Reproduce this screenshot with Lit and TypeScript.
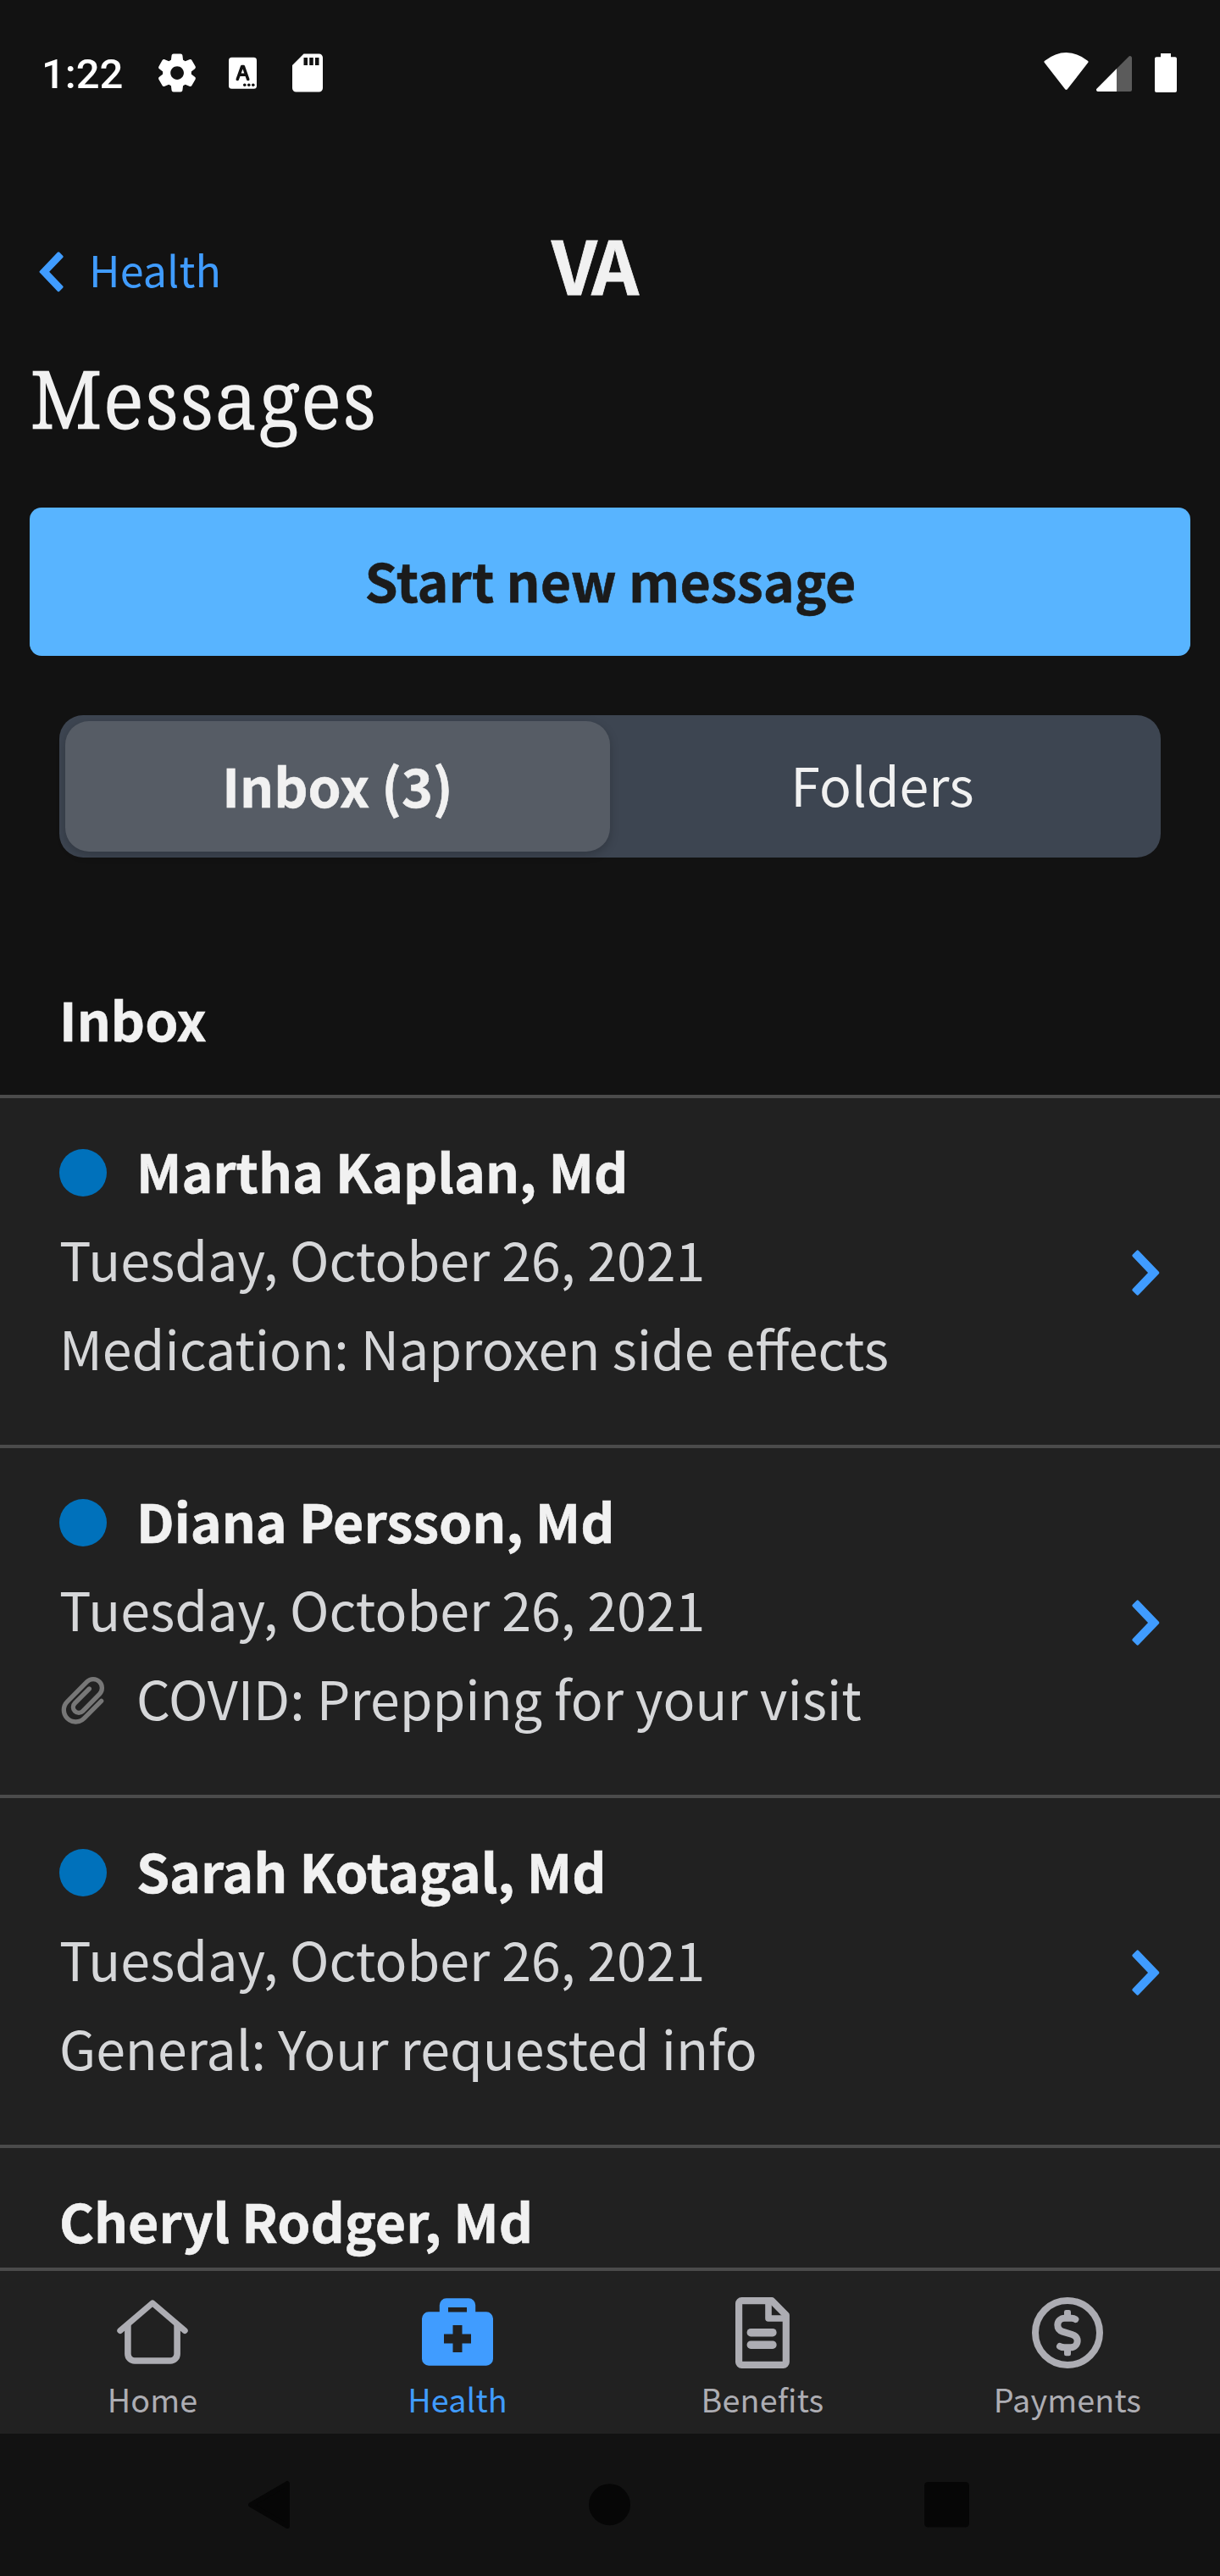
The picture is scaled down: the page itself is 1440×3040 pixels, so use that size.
import { LitElement, html, css, svg, nothing } from "lit";
import { customElement, property } from "lit/decorators.js";
import { classMap } from "lit/directives/class-map.js";

interface Message {
  from: string;
  date: string;
  subject: string;
  unread?: boolean;
  attachment?: boolean;
}

const MESSAGES: Message[] = [
  { from: "Martha Kaplan, Md", date: "Tuesday, October 26, 2021", subject: "Medication: Naproxen side effects", unread: true },
  { from: "Diana Persson, Md", date: "Tuesday, October 26, 2021", subject: "COVID: Prepping for your visit", unread: true, attachment: true },
  { from: "Sarah Kotagal, Md", date: "Tuesday, October 26, 2021", subject: "General: Your requested info", unread: true },
  { from: "Cheryl Rodger, Md", date: "", subject: "" },
];

const chevronShape = svg`<path d="M2.2 6.7 L6.7 2.2 L30.5 27 L6.7 51.8 L2.2 47.3 L21.5 27 Z"
  fill="currentColor" stroke="currentColor" stroke-width="3.6" stroke-linejoin="round"/>`;

const TABS = [
  {
    label: "Home",
    icon: svg`<g fill="none" stroke="currentColor" stroke-linecap="round" stroke-linejoin="round">
      <path stroke-width="7" d="M3.8 39.5 L42 6.8 L80.2 39.5"/>
      <path stroke-width="7.6" stroke-linecap="butt" d="M12.9 32 V67 a8 8 0 0 0 8 8 H63.1 a8 8 0 0 0 8 -8 V32"/></g>`,
  },
  {
    label: "Health",
    active: true,
    icon: svg`<path fill="currentColor" fill-rule="evenodd" d="M28.8 1.3 H55.2 a8 8 0 0 1 8 8 V17.3 H76 a8 8 0 0 1 8 8 V72.7 a8 8 0 0 1 -8 8 H8 a8 8 0 0 1 -8 -8 V25.3 a8 8 0 0 1 8 -8 H20.8 V9.3 a8 8 0 0 1 8 -8 Z
      M31 12 V17.4 H53 V12 Z M36.5 33 V43.5 H26 V54.5 H36.5 V65 H47.5 V54.5 H58 V43.5 H47.5 V33 Z"/>`,
  },
  {
    label: "Benefits",
    icon: svg`<g fill="none" stroke="currentColor" stroke-width="8.2" stroke-linejoin="round">
      <path d="M17.5 4.1 H53 L69.8 21.2 V76.5 a3.4 3.4 0 0 1 -3.4 3.4 H17.5 a3.4 3.4 0 0 1 -3.4 -3.4 V7.5 a3.4 3.4 0 0 1 3.4 -3.4 Z"/>
      <path stroke-width="7.6" d="M49 5 V25 H69"/></g>
      <rect x="23.6" y="37" width="35" height="9.4" rx="4.5" fill="currentColor"/>
      <rect x="23.6" y="51.5" width="35" height="9.4" rx="4.5" fill="currentColor"/>`,
  },
  {
    label: "Payments",
    icon: svg`<circle cx="42" cy="42" r="38" fill="none" stroke="currentColor" stroke-width="8"/>
      <g transform="scale(.33333) translate(-84 -33)">
      <path fill="none" stroke="currentColor" stroke-width="24" stroke-linecap="round" d="M238 111 Q232 107 225 107 H200 A25 25 0 0 0 175 131 C175 142 182 151 193 155 L226 165 C238 169 245 177 245 188 A24 24 0 0 1 221 211 H200 Q190 211 183 207"/>
      <rect x="198" y="78" width="24" height="32" rx="7" fill="currentColor"/>
      <rect x="198" y="205" width="24" height="36" rx="7" fill="currentColor"/></g>`,
  },
];

@customElement("status-bar")
class StatusBar extends LitElement {
  static styles = css`
    :host { display: flex; box-sizing: border-box; height: 172px; padding: 0 51px 0 49px; align-items: flex-start; color: #fff; }
    .time { font: 500 49px/58px Roboto, sans-serif; margin-top: 59px; width: 133px; }
    svg { display: block; margin-top: 59px; flex: none; }
    .gear { width: 54px; height: 54px; }
    .lang { width: 33px; height: 54px; margin-left: 34px; }
    .card { width: 54px; height: 54px; margin-left: 33px; }
    .wifi { width: 53px; height: 54px; margin-left: auto; }
    .signal { width: 42px; height: 54px; margin-left: 9px; }
    .battery { width: 26px; height: 54px; margin-left: 27px; }
  `;
  render() {
    return html`
      <span class="time">1:22</span>
      <svg class="gear" viewBox="0 0 24 24" fill="currentColor"><path d="M19.5 12c0-.23-.01-.45-.03-.68l1.86-1.41c.4-.3.51-.86.26-1.3l-1.87-3.23a.987.987 0 0 0-1.25-.42l-2.15.91c-.37-.26-.76-.49-1.17-.68l-.29-2.31c-.06-.5-.49-.88-.99-.88h-3.73c-.51 0-.94.38-1 .88l-.29 2.31c-.41.19-.8.42-1.17.68l-2.15-.91c-.46-.2-1-.02-1.25.42L2.41 8.62c-.25.44-.14.99.26 1.3l1.86 1.41a7.343 7.343 0 0 0 0 1.35l-1.86 1.41c-.4.3-.51.86-.26 1.3l1.87 3.23c.25.44.79.62 1.25.42l2.15-.91c.37.26.76.49 1.17.68l.29 2.31c.06.5.49.88.99.88h3.73c.5 0 .93-.38.99-.88l.29-2.31c.41-.19.8-.42 1.17-.68l2.15.91c.46.2 1 .02 1.25-.42l1.87-3.23c.25-.44.14-.99-.26-1.3l-1.86-1.41c.03-.23.04-.45.04-.68zm-7.46 3.5c-1.93 0-3.5-1.57-3.5-3.5s1.57-3.5 3.5-3.5 3.5 1.57 3.5 3.5-1.57 3.5-3.5 3.5z"/></svg>
      <svg class="lang" viewBox="0 0 33 54"><rect y="8.7" width="33" height="37" rx="3.5" fill="currentColor"/>
        <path d="M10.3 34.5 L15.6 19.6 H17.4 L22.7 34.5 M12.6 29.3 H20.4" fill="none" stroke="#121212" stroke-width="3.6" stroke-linejoin="round" stroke-linecap="round"/>
        <g fill="#121212"><circle cx="18.8" cy="41.2" r="1.8"/><circle cx="23.8" cy="41.2" r="1.8"/><circle cx="28.8" cy="41.2" r="1.8"/></g></svg>
      <svg class="card" viewBox="0 0 24 24" fill="currentColor"><path d="M18 2h-8L4 8v12c0 1.1.9 2 2 2h12c1.1 0 2-.9 2-2V4c0-1.1-.9-2-2-2zm-6 6h-2V4h2v4zm3 0h-2V4h2v4zm3 0h-2V4h2v4z"/></svg>
      <svg class="wifi" viewBox="0 0 53 54"><path d="M2.2 14 Q26.5 -4.5 50.8 14 L26.5 45.2 Z" fill="currentColor" stroke="currentColor" stroke-width="3.4" stroke-linejoin="round"/></svg>
      <svg class="signal" viewBox="0 0 42 54"><path d="M24 22 L38.3 7.7 A2.2 2.2 0 0 1 42 9.2 V47 A2 2 0 0 1 40 49 H24 Z" fill="#5b5b5b"/><path d="M24 22 V49 H2 A2 2 0 0 1 .7 45.5 Z" fill="currentColor"/></svg>
      <svg class="battery" viewBox="0 0 26 54"><path d="M7 4 H19 V8.3 H24 a2 2 0 0 1 2 2 V48 a2 2 0 0 1 -2 2 H2 a2 2 0 0 1 -2 -2 V10.3 a2 2 0 0 1 2 -2 H7 Z" fill="currentColor"/></svg>
    `;
  }
}

@customElement("message-row")
class MessageRow extends LitElement {
  @property({ attribute: false }) message!: Message;
  static styles = css`
    :host { display: flex; flex: none; box-sizing: border-box; height: 413px; padding: 32px 70px 0 70px; border-top: 4px solid #4b4b4b; background: #212121; justify-content: space-between; }
    .line { display: flex; align-items: center; height: 105px; line-height: 103px; gap: 35px; white-space: nowrap; color: #d6d7d9; }
    .line > span:last-child { height: 105px; }
    .from { font-weight: 700; color: #f1f1f1; line-height: 105px; -webkit-text-stroke: .6px currentColor; letter-spacing: -.05px; }
    .dot { width: 56px; height: 56px; margin-top: 7px; border-radius: 50%; background: #0071bb; }
    .clip { width: 56px; height: 63px; margin-top: 6px; color: #777; }
    .go { width: 34px; height: 54px; margin-top: 147px; color: #409cff; }
  `;
  render() {
    const m = this.message;
    return html`
      <div>
        <div class="line from">${m.unread ? html`<span class="dot"></span>` : nothing}<span>${m.from}</span></div>
        <div class="line"><span>${m.date}</span></div>
        <div class="line">
          ${m.attachment
            ? html`<svg class="clip" viewBox="30 45 168 189"><path fill="none" stroke="currentColor" stroke-width="16" stroke-linecap="round" d="M179 142 L117.7 203.7 A42 42 0 0 1 58.3 144.3 L128 74 A31 31 0 0 1 172 118 L113 178 A19.5 19.5 0 0 1 85 150 L136 99"/></svg>`
            : nothing}<span>${m.subject}</span>
        </div>
      </div>
      ${m.date ? html`<svg class="go" viewBox="0 0 34 54">${chevronShape}</svg>` : nothing}
    `;
  }
}

@customElement("app-root")
class AppRoot extends LitElement {
  static styles = css`
    :host { display: flex; flex-direction: column; width: 1440px; height: 3040px; overflow: hidden; background: #121212; color: #f1f1f1; font-family: "Noto Sans CJK SC", "Noto Sans", sans-serif; font-size: 62.65px; }
    .header { display: flex; align-items: center; height: 100px; margin-top: 88px; padding-left: 45px; }
    .back { display: flex; align-items: center; width: 606px; margin-top: 14px; color: #409cff; font-size: 50.2px; line-height: 60px; letter-spacing: .1px; gap: 30px; }
    .back svg { width: 30px; height: 47.5px; margin-top: 8px; transform: scaleX(-1); }
    .logo { font-size: 87px; font-weight: 700; line-height: 100px; letter-spacing: -5px; -webkit-text-stroke: .8px currentColor; }
    h1 { margin: 60px 0 0 36px; font: 300 91px/100px "Noto Serif", serif; letter-spacing: 2.2px; -webkit-text-stroke: 2.4px currentColor; }
    .compose { height: 175px; margin: 79px 35px 0; box-sizing: border-box; padding: 0 0 6px 1px; border-radius: 14px; background: #58b4ff; color: #1b1b1b; font-weight: 700; -webkit-text-stroke: .6px currentColor; display: flex; align-items: center; justify-content: center; }
    .segments { display: grid; grid-template-columns: 1fr 1fr; height: 168px; box-sizing: border-box; margin: 70px 70px 0; padding: 7px; border-radius: 28px; background: #3d4551; }
    .segment { display: flex; align-items: center; justify-content: center; padding-bottom: 7px; border-radius: 28px; }
    .segment.on { padding-bottom: 6px; background: #565c65; font-weight: 700; -webkit-text-stroke: .6px currentColor; box-shadow: 0 4px 12px rgba(0, 0, 0, .2); }
    h2 { margin: 0; padding: 137px 0 38px 70px; font-size: inherit; font-weight: 700; line-height: 105px; -webkit-text-stroke: .6px currentColor; }
    .list { flex: 1; min-height: 0; display: flex; flex-direction: column; overflow: hidden; background: #212121; }
    .tabs { display: grid; grid-template-columns: repeat(4, 1fr); height: 196px; box-sizing: border-box; border-top: 4px solid #4b4b4b; background: #212121; flex: none; }
    .tab { display: flex; flex-direction: column; align-items: center; padding-top: 31px; color: #adadb3; font-size: 37.7px; line-height: 50px; letter-spacing: .15px; }
    .tab.on { color: #409cff; }
    .tab svg { width: 84px; height: 84px; margin-bottom: 11px; }
    .system { display: flex; align-items: center; height: 168px; padding-left: 293px; flex: none; color: #060606; }
    .system svg { display: block; height: 58px; }
    .sys-back { width: 49px; margin-right: 353px; }
    .sys-home { width: 49px; margin-right: 347px; }
    .sys-recent { width: 53px; }
  `;
  render() {
    return html`
      <status-bar></status-bar>
      <div class="header">
        <div class="back"><svg viewBox="0 0 34 54">${chevronShape}</svg><span>Health</span></div>
        <div class="logo">VA</div>
      </div>
      <h1>Messages</h1>
      <div class="compose">Start new message</div>
      <div class="segments">
        <div class="segment on">Inbox (3)</div>
        <div class="segment">Folders</div>
      </div>
      <h2>Inbox</h2>
      <div class="list">${MESSAGES.map((m) => html`<message-row .message=${m}></message-row>`)}</div>
      <div class="tabs">
        ${TABS.map((t) => html`<div class=${classMap({ tab: true, on: !!t.active })}><svg viewBox="0 0 84 84">${t.icon}</svg><span>${t.label}</span></div>`)}
      </div>
      <div class="system">
        <svg class="sys-back" viewBox="0 0 49 58"><path d="M3 29 L46 4 V54 Z" fill="currentColor" stroke="currentColor" stroke-width="6" stroke-linejoin="round"/></svg>
        <svg class="sys-home" viewBox="0 0 49 58"><circle cx="24.5" cy="28.7" r="24.5" fill="currentColor"/></svg>
        <svg class="sys-recent" viewBox="0 0 53 58"><rect y="2" width="53" height="53.5" rx="4.5" fill="currentColor"/></svg>
      </div>
    `;
  }
}
